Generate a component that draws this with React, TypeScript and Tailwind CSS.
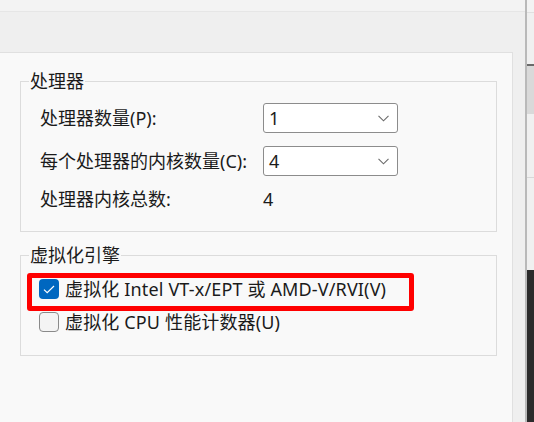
import React from "react";

const font = { fontFamily: '"Noto Sans", "Noto Sans CJK SC", sans-serif' };

const Chevron = () => (
  <svg width="11" height="7" viewBox="0 0 11 7" fill="none">
    <path d="M0.5 0.8 L5.5 5.8 L10.5 0.8" stroke="#6b6b6b" strokeWidth="1.1" />
  </svg>
);

const Select = ({ value }: { value: string }) => (
  <div className="flex h-[30px] w-[135px] items-center justify-between rounded-[3px] border border-[#8c8c8c] bg-white pl-[5px] pr-[8px]">
    <span>{value}</span>
    <Chevron />
  </div>
);

const Checkbox = ({ checked }: { checked?: boolean }) =>
  checked ? (
    <div className="flex h-[20px] w-[20px] items-center justify-center rounded-[4px] bg-[#0067c0]">
      <svg width="12" height="9" viewBox="0 0 12 9" fill="none">
        <path d="M1 4.6 L4.2 7.6 L11 1" stroke="white" strokeWidth="1.2" />
      </svg>
    </div>
  ) : (
    <div className="h-[20px] w-[20px] rounded-[4px] border border-[#8a8a8a] bg-[#f4f4f4]" />
  );

const Group = ({
  title,
  className,
  children,
}: {
  title: string;
  className: string;
  children: React.ReactNode;
}) => (
  <div className={`relative ml-[20px] w-[477px] border border-[#dcdcdc] ${className}`}>
    <span className="absolute -top-[14px] left-[8px] bg-[#f9f9f9] px-px leading-[26px]">{title}</span>
    {children}
  </div>
);

export default function App() {
  return (
    <div className="flex h-[422px] w-[534px] overflow-hidden text-[18px] text-[#1b1b1b]" style={font}>
      <div className="flex w-[525px] flex-col bg-[#efefef]">
        <div className="h-[12px] border-b border-[#e6e6e6] bg-[#f3f3f3]" />
        <div className="h-[40px]" />
        <div className="w-[513px] flex-1 border-t border-r border-[#e0e0e0] bg-[#f9f9f9] pt-[28px]">
          <Group title="处理器" className="h-[151px]">
            <div className="grid grid-cols-[223px_135px] items-center gap-y-[13px] pt-[21px] pl-[19px]">
              <span>处理器数量(P):</span>
              <Select value="1" />
              <span>每个处理器的内核数量(C):</span>
              <Select value="4" />
              <span className="leading-[20px]">处理器内核总数:</span>
              <span className="leading-[20px]">4</span>
            </div>
          </Group>
          <Group title="虚拟化引擎" className="mt-[23px] h-[101px]">
            <div className="flex flex-col gap-[13px] pt-[23px] pl-[18px]">
              <label className="flex h-[20px] items-center gap-[6px]">
                <Checkbox checked />
                <span className="tracking-[0.15px]">虚拟化 Intel VT-x/EPT 或 AMD-V/RVI(V)</span>
              </label>
              <label className="flex h-[20px] items-center gap-[6px]">
                <Checkbox />
                <span className="tracking-[0.15px]">虚拟化 CPU 性能计数器(U)</span>
              </label>
            </div>
            <div className="absolute left-[6px] top-[17px] h-[38px] w-[387px] rounded-[3px] border-[5px] border-[#ff0000]" />
          </Group>
        </div>
      </div>
      <div className="w-[2px] bg-[#b9b9b9]" />
      <div className="flex flex-1 flex-col bg-[#f0f0f0]">
        <div className="h-[13px] border-b border-[#e0e0e0] bg-[#f3f3f3]" />
        <div className="h-[53px] border-b-2 border-[#6a6a6a]" />
        <div className="h-[48px] bg-[#d9d9d9]" />
        <div className="h-[64px] border-b border-[#d8d8d8]" />
        <div className="h-[92px]" />
        <div className="flex-1 bg-[#2b2b2b]" />
      </div>
    </div>
  );
}
